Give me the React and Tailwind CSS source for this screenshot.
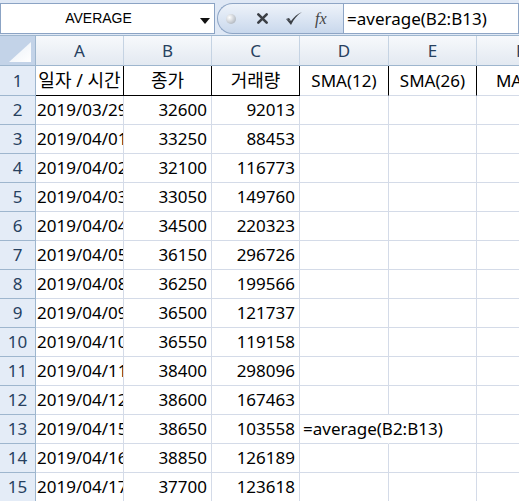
import React from 'react';

const cellFont = { fontFamily: '"Noto Sans", "Noto Sans CJK KR", sans-serif' };

const rows = [
  ['2019/03/29', '32600', '92013'],
  ['2019/04/01', '33250', '88453'],
  ['2019/04/02', '32100', '116773'],
  ['2019/04/03', '33050', '149760'],
  ['2019/04/04', '34500', '220323'],
  ['2019/04/05', '36150', '296726'],
  ['2019/04/08', '36250', '199566'],
  ['2019/04/09', '36500', '121737'],
  ['2019/04/10', '36550', '119158'],
  ['2019/04/11', '38400', '298096'],
  ['2019/04/12', '38600', '167463'],
  ['2019/04/15', '38650', '103558'],
  ['2019/04/16', '38850', '126189'],
  ['2019/04/17', '37700', '123618'],
];

const Toolbar = () => (
  <div className="flex h-[36px] shrink-0 items-start border-b border-[#9eb6ce] bg-[#dfe8f5] pt-[3px]">
    <div className="relative flex h-[31px] w-[215px] shrink-0 items-center border border-[#8ba3c4] bg-white">
      <span className="w-[195px] text-center text-[14px] text-black" style={{ fontFamily: '"Liberation Sans", Arial, sans-serif' }}>
        AVERAGE
      </span>
      <svg width="10" height="6" viewBox="0 0 10 6" className="absolute left-[199px] top-[14px]">
        <path d="M0 0 H10 L5 6 Z" fill="#111" />
      </svg>
    </div>
    <div className="ml-[2px] flex h-[31px] w-[126px] shrink-0 items-center rounded-l-full border border-r-0 border-[#8ea5c5] bg-linear-to-b from-[#eef3fa] to-[#c9d8ec]">
      <div className="ml-[8px] h-[10px] w-[10px] rounded-full bg-radial-[at_35%_35%] from-white to-[#9aa3ae]" />
      <svg width="13" height="13" viewBox="0 0 14 14" className="ml-[20px]">
        <path d="M2.5 2.5 L11.5 11.5 M11.5 2.5 L2.5 11.5" stroke="#3b3f45" strokeWidth="2.8" strokeLinecap="round" />
      </svg>
      <svg width="18" height="16" viewBox="0 0 18 16" className="ml-[16px]">
        <path d="M1 8 L6 14 C9 8 12 4 17 1 C12 3 9 6 6 10 Z" fill="#3b3f45" />
        <path d="M1 8 L4 7 L6 10" fill="#3b3f45" />
      </svg>
      <span
        className="ml-[12px] text-[16px] italic text-[#444]"
        style={{ fontFamily: '"Liberation Serif", "Times New Roman", serif' }}
      >
        fx
      </span>
    </div>
    <div className="flex h-[31px] flex-1 items-center border border-[#8ea5c5] bg-white pl-[3px] text-[17px] text-black" style={cellFont}>
      =average(B2:B13)
    </div>
  </div>
);

const widths = ['w-[88px]', 'w-[88px]', 'w-[88px]', 'w-[89px]', 'w-[88px]', 'w-[88px]'];
const letters = ['A', 'B', 'C', 'D', 'E', 'F'];

const HeaderRow = () => (
  <div className="flex h-[30px] shrink-0">
    <div className="relative w-[36px] shrink-0 border-r border-b border-[#9eb6ce] bg-[#c3d3e8]">
      <svg width="22" height="20" viewBox="0 0 22 20" className="absolute right-[4px] bottom-[3px]">
        <defs>
          <linearGradient id="tri" x1="0" y1="0" x2="1" y2="1">
            <stop offset="0" stopColor="#e9eff7" />
            <stop offset="1" stopColor="#ffffff" />
          </linearGradient>
        </defs>
        <path d="M22 0 L22 20 L0 20 Z" fill="url(#tri)" />
      </svg>
    </div>
    {letters.map((l, i) => (
      <div
        key={l}
        className={`${widths[i]} flex shrink-0 items-center justify-center border-r border-b border-r-[#c5d3e3] border-b-[#9eb6ce] bg-linear-to-b from-[#f7f9fc] to-[#e3e9f1] text-[17px] text-[#27415f]`}
        style={cellFont}
      >
        {l}
      </div>
    ))}
  </div>
);

const RowHead = ({ n }) => (
  <div className="flex w-[36px] shrink-0 items-center justify-center border-r border-b border-[#9eb6ce] bg-[#e4ecf7] text-[17px] text-[#27415f]">
    {n}
  </div>
);

const FirstRow = () => {
  const titles = ['일자 / 시간', '종가', '거래량', 'SMA(12)', 'SMA(26)', 'MACD'];
  return (
    <div className="flex h-[30px] shrink-0" style={cellFont}>
      <RowHead n={1} />
      {titles.map((t, i) => (
        <div
          key={t}
          className={`${widths[i]} flex shrink-0 items-center justify-center overflow-hidden whitespace-nowrap border-r border-b text-black ${
            i < 3 ? 'text-[18px]' : 'text-[17px]'
          } ${i < 5 ? 'border-r-black' : 'border-r-[#d4dbe8]'} ${i < 3 ? 'border-b-black' : 'border-b-[#d4dbe8]'}`}
        >
          {t}
        </div>
      ))}
    </div>
  );
};

const DataRow = ({ n, r }) => {
  const isFormula = n === 13;
  return (
    <div className="flex h-[29px] shrink-0" style={cellFont}>
      <RowHead n={n} />
      <div className="flex w-[88px] shrink-0 items-center overflow-hidden whitespace-nowrap border-r border-b border-[#d4dbe8] pl-[1px] text-[17px] text-black">
        {r[0]}
      </div>
      <div className="flex w-[88px] shrink-0 items-center justify-end border-r border-b border-[#d4dbe8] pr-[4px] text-[17px] text-black">
        {r[1]}
      </div>
      <div className="flex w-[88px] shrink-0 items-center justify-end border-r border-b border-[#d4dbe8] pr-[4px] text-[17px] text-black">
        {r[2]}
      </div>
      <div
        className={`relative flex w-[89px] shrink-0 items-center border-b border-[#d4dbe8] ${
          isFormula ? 'border-r border-r-white' : 'border-r'
        }`}
      >
        {isFormula && (
          <span className="absolute left-[3px] z-10 whitespace-nowrap text-[17px] text-black">=average(B2:B13)</span>
        )}
      </div>
      <div className="w-[88px] shrink-0 border-r border-b border-[#d4dbe8]" />
      <div className="w-[88px] shrink-0 border-r border-b border-[#d4dbe8]" />
    </div>
  );
};

export default function App() {
  return (
    <div className="flex h-[501px] w-[519px] flex-col overflow-hidden bg-white">
      <Toolbar />
      <div className="flex w-[565px] flex-col">
        <HeaderRow />
        <FirstRow />
        {rows.map((r, i) => (
          <DataRow key={i} n={i + 2} r={r} />
        ))}
      </div>
    </div>
  );
}
